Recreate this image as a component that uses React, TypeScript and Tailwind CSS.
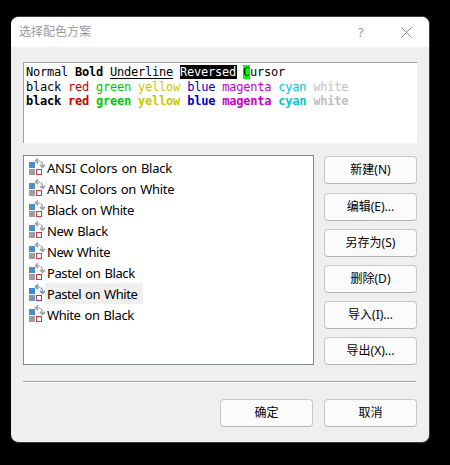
import React from "react";

const schemes = [
  { name: "ANSI Colors on Black", tracking: "tracking-[-0.25px]" },
  { name: "ANSI Colors on White", tracking: "tracking-[-0.3px]" },
  { name: "Black on White", tracking: "tracking-[-0.4px]" },
  { name: "New Black", tracking: "tracking-[-0.33px]" },
  { name: "New White", tracking: "tracking-[-0.44px]" },
  { name: "Pastel on Black", tracking: "tracking-[-0.4px]" },
  { name: "Pastel on White", tracking: "tracking-[-0.44px]", selected: true },
  { name: "White on Black", tracking: "tracking-[-0.4px]" },
];

const colors = [
  { name: "black", cls: "text-black" },
  { name: "red", cls: "text-[#c80000]" },
  { name: "green", cls: "text-[#00c800]" },
  { name: "yellow", cls: "text-[#c8c800]" },
  { name: "blue", cls: "text-[#0000c8]" },
  { name: "magenta", cls: "text-[#c800c8]" },
  { name: "cyan", cls: "text-[#00c8c8]" },
  { name: "white", cls: "text-[#c0c0c0]" },
];

function SchemeIcon({ selected = false }: { selected?: boolean }) {
  const gray = selected ? "#7595b3" : "#9a9fa2";
  const blue = selected ? "#3888d4" : "#4b8dcd";
  const red = selected ? "#a03c5a" : "#dc3440";
  return (
    <svg width="17" height="17" viewBox="0 0 17 17" className="mb-[2px] shrink-0">
      <rect x="0" y="4" width="6" height="6" fill={blue} />
      <rect x="0" y="11" width="6" height="6" fill={gray} />
      <rect x="7.5" y="11.5" width="5" height="5" fill="white" stroke={red} />
      <path d="M7 2.8h2q4.2.3 4.5 4.2v1.5" fill="none" stroke={gray} strokeWidth="1.2" strokeDasharray="3.6 1 4.2 0" />
      <path d="M9 .4 6.6 2.8 9 5.2M11 6.9l2.5 2.4L16 6.9" fill="none" stroke={gray} strokeWidth="1.6" />
    </svg>
  );
}

function Button({ children, className = "" }: { children: React.ReactNode; className?: string }) {
  return (
    <button
      className={`flex h-7 w-[93px] shrink-0 items-center justify-center rounded-[4px] border border-[#c8c8c8] border-b-[#b5b5b5] bg-[#fbfbfb] pb-px text-[12px] leading-none text-black ${className}`}
    >
      {children}
    </button>
  );
}

function ColorLine({ bold = false }: { bold?: boolean }) {
  return (
    <div className={bold ? "font-bold" : ""}>
      {colors.map((c) => (
        <React.Fragment key={c.name}>
          <span className={c.cls}>{c.name}</span>{" "}
        </React.Fragment>
      ))}
    </div>
  );
}

export default function App() {
  return (
    <div className="h-[465px] w-[450px] overflow-hidden bg-black pl-[11px] pt-[16px] font-['Noto_Sans','Noto_Sans_CJK_SC',sans-serif]">
      <div className="flex h-[427px] w-[419px] flex-col overflow-hidden rounded-[8px] border-y border-r border-[#3a3a3a] bg-[#efefef]">
        <header className="flex h-[30px] shrink-0 items-center justify-between bg-white pl-2 pr-[17px] text-[12px] text-[#999]">
          <span>选择配色方案</span>
          <span className="flex items-center">
            <span className="w-[6px] text-[13px] leading-none">?</span>
            <svg className="ml-[37px]" width="11" height="11" viewBox="0 0 11 11">
              <path d="M.5.5l10 10M10.5.5l-10 10" stroke="#8c8c8c" strokeWidth="1" />
            </svg>
          </span>
        </header>
        <main className="flex flex-col pl-3 pt-[15px]">
          <div className="h-[81px] w-[394px] whitespace-pre border-l border-t border-[#a0a0a0] border-r-white bg-white pl-[2px] pt-[2px] font-['DejaVu_Sans_Mono',monospace] text-[12px] leading-[14px] tracking-[-0.224px]">
            <div className="mb-px">
              Normal <b>Bold</b> <span className="underline underline-offset-2">Underline</span>{" "}
              <span className="inline-block w-[57px] bg-black text-white">Reversed</span>
              <span className="ml-[6px] inline-block w-[7px] bg-[#00ff00]">C</span>ursor
            </div>
            <ColorLine />
            <ColorLine bold />
          </div>
          <div className="mt-3 flex gap-[10px]">
            <ul className="h-[210px] w-[291px] border border-[#828790] bg-white pt-px">
              {schemes.map((s) => (
                <li key={s.name} className="flex h-[21px] items-center pl-[5px] text-[13px] text-black">
                  <SchemeIcon selected={s.selected} />
                  <span
                    className={`-ml-px flex h-[21px] items-center whitespace-nowrap pl-[2px] pr-[6px] pt-[2px] [word-spacing:1px] ${s.tracking} ${s.selected ? "bg-[#efefef]" : ""}`}
                  >
                    {s.name}
                  </span>
                </li>
              ))}
            </ul>
            <div className="flex flex-col gap-2 pt-px">
              <Button className="mb-px">新建(N)</Button>
              <Button>编辑(E)...</Button>
              <Button>另存为(S)</Button>
              <Button>删除(D)</Button>
              <Button>导入(I)...</Button>
              <Button>导出(X)...</Button>
            </div>
          </div>
          <div className="mt-4 h-[2px] w-[393px] border-b border-t border-b-white border-t-[#a0a0a0]" />
          <footer className="mt-4 flex gap-[11px] pl-[197px]">
            <Button>确定</Button>
            <Button>取消</Button>
          </footer>
        </main>
      </div>
    </div>
  );
}
